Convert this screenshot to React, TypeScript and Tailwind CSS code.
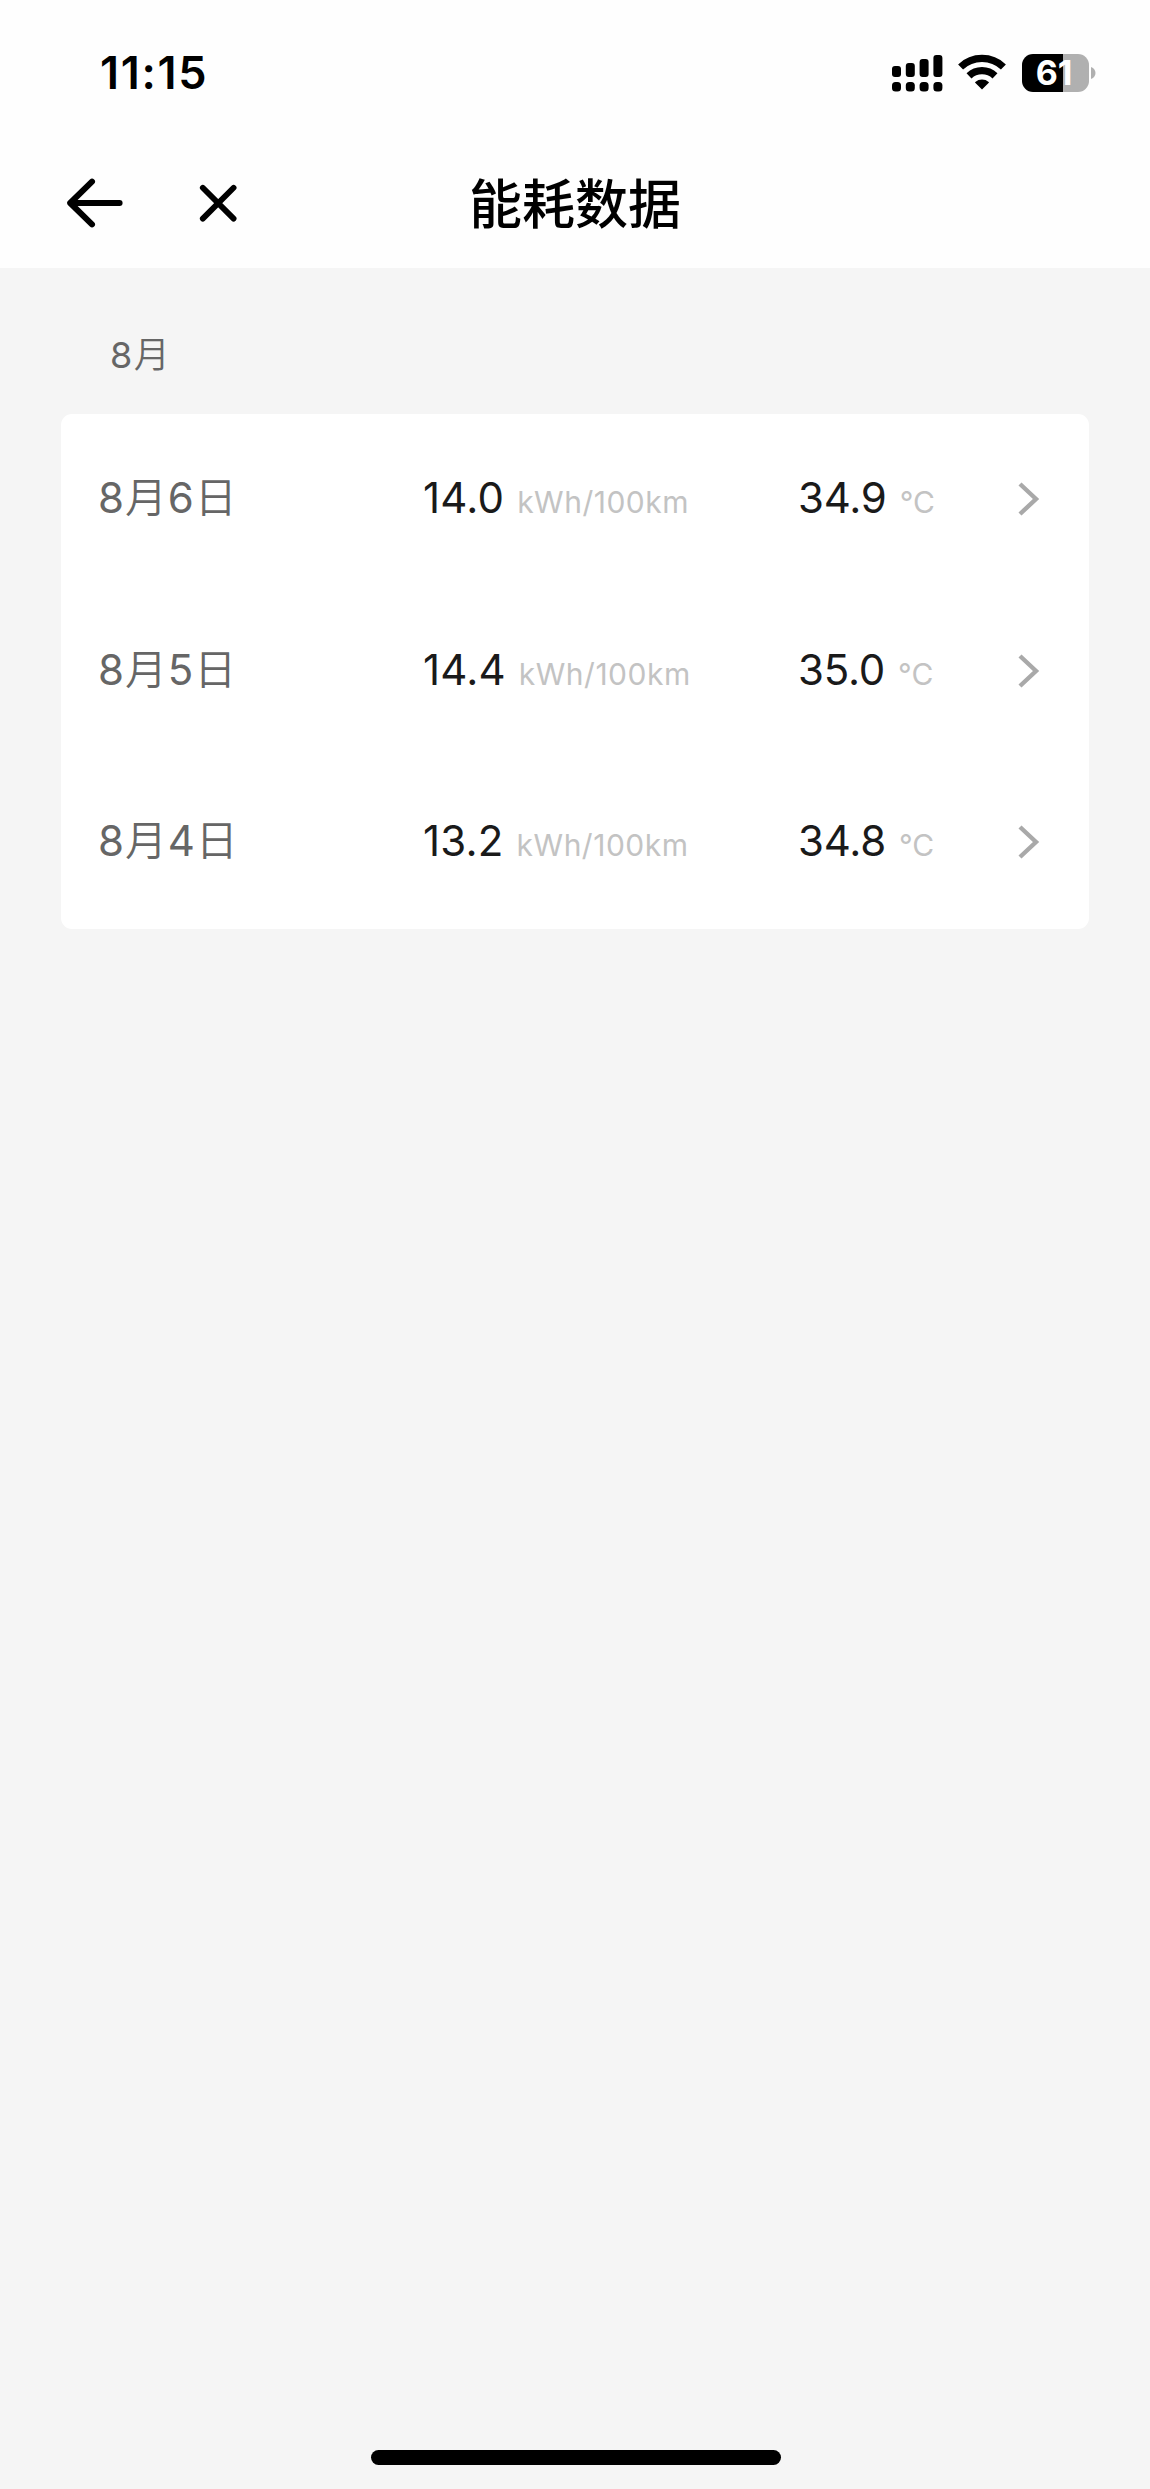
const App = () => {
  return (
    <div className="flex h-[2489px] w-[1150px] flex-col bg-[#f5f5f5] font-['Inter','Noto_Sans_CJK_SC',sans-serif]">
      <header className="flex h-[268px] flex-col bg-[#fefefe]">
        <StatusBar />
        <NavBar />
      </header>
      <main className="flex grow flex-col px-[61px]">
        <div className="flex h-[146px] items-center pl-[49px] text-[36px] tracking-[1.5px] text-[#666666]">
          <span className="mt-[28px]">
            8<span className="font-[350]">月</span>
          </span>
        </div>
        <div className="flex h-[515px] flex-col rounded-[11px] bg-white">
          {records.map((r) => (
            <RecordRow key={r.day} {...r} />
          ))}
        </div>
      </main>
      <footer className="flex h-[39px] justify-center">
        <div className="ml-[2px] h-[15px] w-[410px] rounded-full bg-black" />
      </footer>
    </div>
  )
}

export default App

const StatusBar = () => (
  <div className="flex h-[140px] items-start justify-between pt-[46px] pr-[54px] pl-[100px]">
    <span className="text-[45px] leading-[54px] font-semibold tracking-[1.7px] text-black">
      11:15
    </span>
    <div className="flex items-start pt-[8px]">
      <SignalIcon />
      <WifiIcon />
      <BatteryIcon />
    </div>
  </div>
)

const NavBar = () => (
  <div className="grid h-[128px] grid-cols-[1fr_auto_1fr]">
    <div className="flex h-[126px] items-center gap-[72px] pl-[65px]">
      <button>
        <svg
          className="h-[52px] w-[60px]"
          viewBox="0 0 60 52"
          fill="none"
          stroke="#000"
          strokeWidth="6"
          strokeLinecap="round"
          strokeLinejoin="round"
        >
          <path d="M27 4.7 5.2 26 27 47.3M5.2 26H54.6" />
        </svg>
      </button>
      <button>
        <svg
          className="h-[42px] w-[42px]"
          viewBox="0 0 42 42"
          fill="none"
          stroke="#000"
          strokeWidth="5.8"
          strokeLinecap="round"
        >
          <path d="M5.8 5.8 36.6 36.6M36.6 5.8 5.8 36.6" />
        </svg>
      </button>
    </div>
    <h1 className="pt-[25px] text-[53px] leading-[80px] font-medium text-black">
      能耗数据
    </h1>
    <div />
  </div>
)

type RecordProps = {
  month: number
  day: number
  energy: string
  temp: string
}

const RecordRow = ({ month, day, energy, temp }: RecordProps) => (
  <div className="flex h-[172px] items-start pt-[54px] pl-[37px]">
    <span className="w-[325px] text-[42px] leading-[60px] tracking-[0.9px] text-[#666666]">
      {month}
      <span className="font-[350]">月</span>
      {day}
      <span className="font-[350]">日</span>
    </span>
    <div className="flex w-[375px] items-baseline gap-[13px] leading-[60px]">
      <span className="text-[42px] tracking-[0.2px] text-[#1a1a1a]">
        {energy}
      </span>
      <span className="text-[30px] tracking-[0.5px] text-[#c3c3c3]">
        kWh/100km
      </span>
    </div>
    <div className="flex w-[218px] items-baseline gap-[13px] leading-[60px]">
      <span className="text-[42px] tracking-[-0.2px] text-[#1a1a1a]">
        {temp}
      </span>
      <span className="text-[30px] text-[#c3c3c3]">°C</span>
    </div>
    <svg
      className="mt-[13px] h-[36px] w-[30px]"
      viewBox="0 0 30 36"
      fill="none"
      stroke="#a9a9a9"
      strokeWidth="4.4"
    >
      <path d="M4 3 20 18 4 33" />
    </svg>
  </div>
)

const SignalIcon = () => (
  <svg className="mr-[15px] h-[38px] w-[51px]" viewBox="0 0 51 38">
    <rect x="0" y="12" width="9" height="11" rx="3" />
    <rect x="13.8" y="9" width="9" height="14" rx="3" />
    <rect x="27.6" y="5" width="9" height="18" rx="3" />
    <rect x="41.4" y="1" width="9" height="22" rx="3" />
    <rect x="0" y="28" width="9" height="9.5" rx="3.5" />
    <rect x="13.8" y="28" width="9" height="9.5" rx="3.5" />
    <rect x="27.6" y="28" width="9" height="9.5" rx="3.5" />
    <rect x="41.4" y="28" width="9" height="9.5" rx="3.5" />
  </svg>
)

const WifiIcon = () => (
  <svg
    className="mr-[16px] h-[36px] w-[48px]"
    viewBox="0 0 48 36"
    fill="none"
    stroke="#000"
    strokeWidth="7.2"
  >
    <path d="M2.6 13A31 31 0 0 1 45.4 13" />
    <path d="M11 21.8A19 19 0 0 1 37 21.8" />
    <path
      d="M24 35.6 17.2 28.8Q16.8 28.3 17.3 27.9A10.5 10.5 0 0 1 30.7 27.9Q31.2 28.3 30.8 28.8Z"
      fill="#000"
      stroke="none"
    />
  </svg>
)

const BatteryIcon = () => (
  <div className="flex items-center gap-[2px]">
    <div className="flex h-[38px] w-[67px] items-center justify-center rounded-[11px] bg-linear-to-r from-black from-[61%] to-[#b0b0b0] to-[61%]">
      <span className="mr-[3px] text-[34px] leading-[38px] font-bold text-white">
        61
      </span>
    </div>
    <svg className="h-[12px] w-[5px]" viewBox="0 0 5 12">
      <path d="M0 0C6 2 6 10 0 12Z" fill="#b0b0b0" />
    </svg>
  </div>
)

const records: RecordProps[] = [
  { month: 8, day: 6, energy: '14.0', temp: '34.9' },
  { month: 8, day: 5, energy: '14.4', temp: '35.0' },
  { month: 8, day: 4, energy: '13.2', temp: '34.8' },
]
